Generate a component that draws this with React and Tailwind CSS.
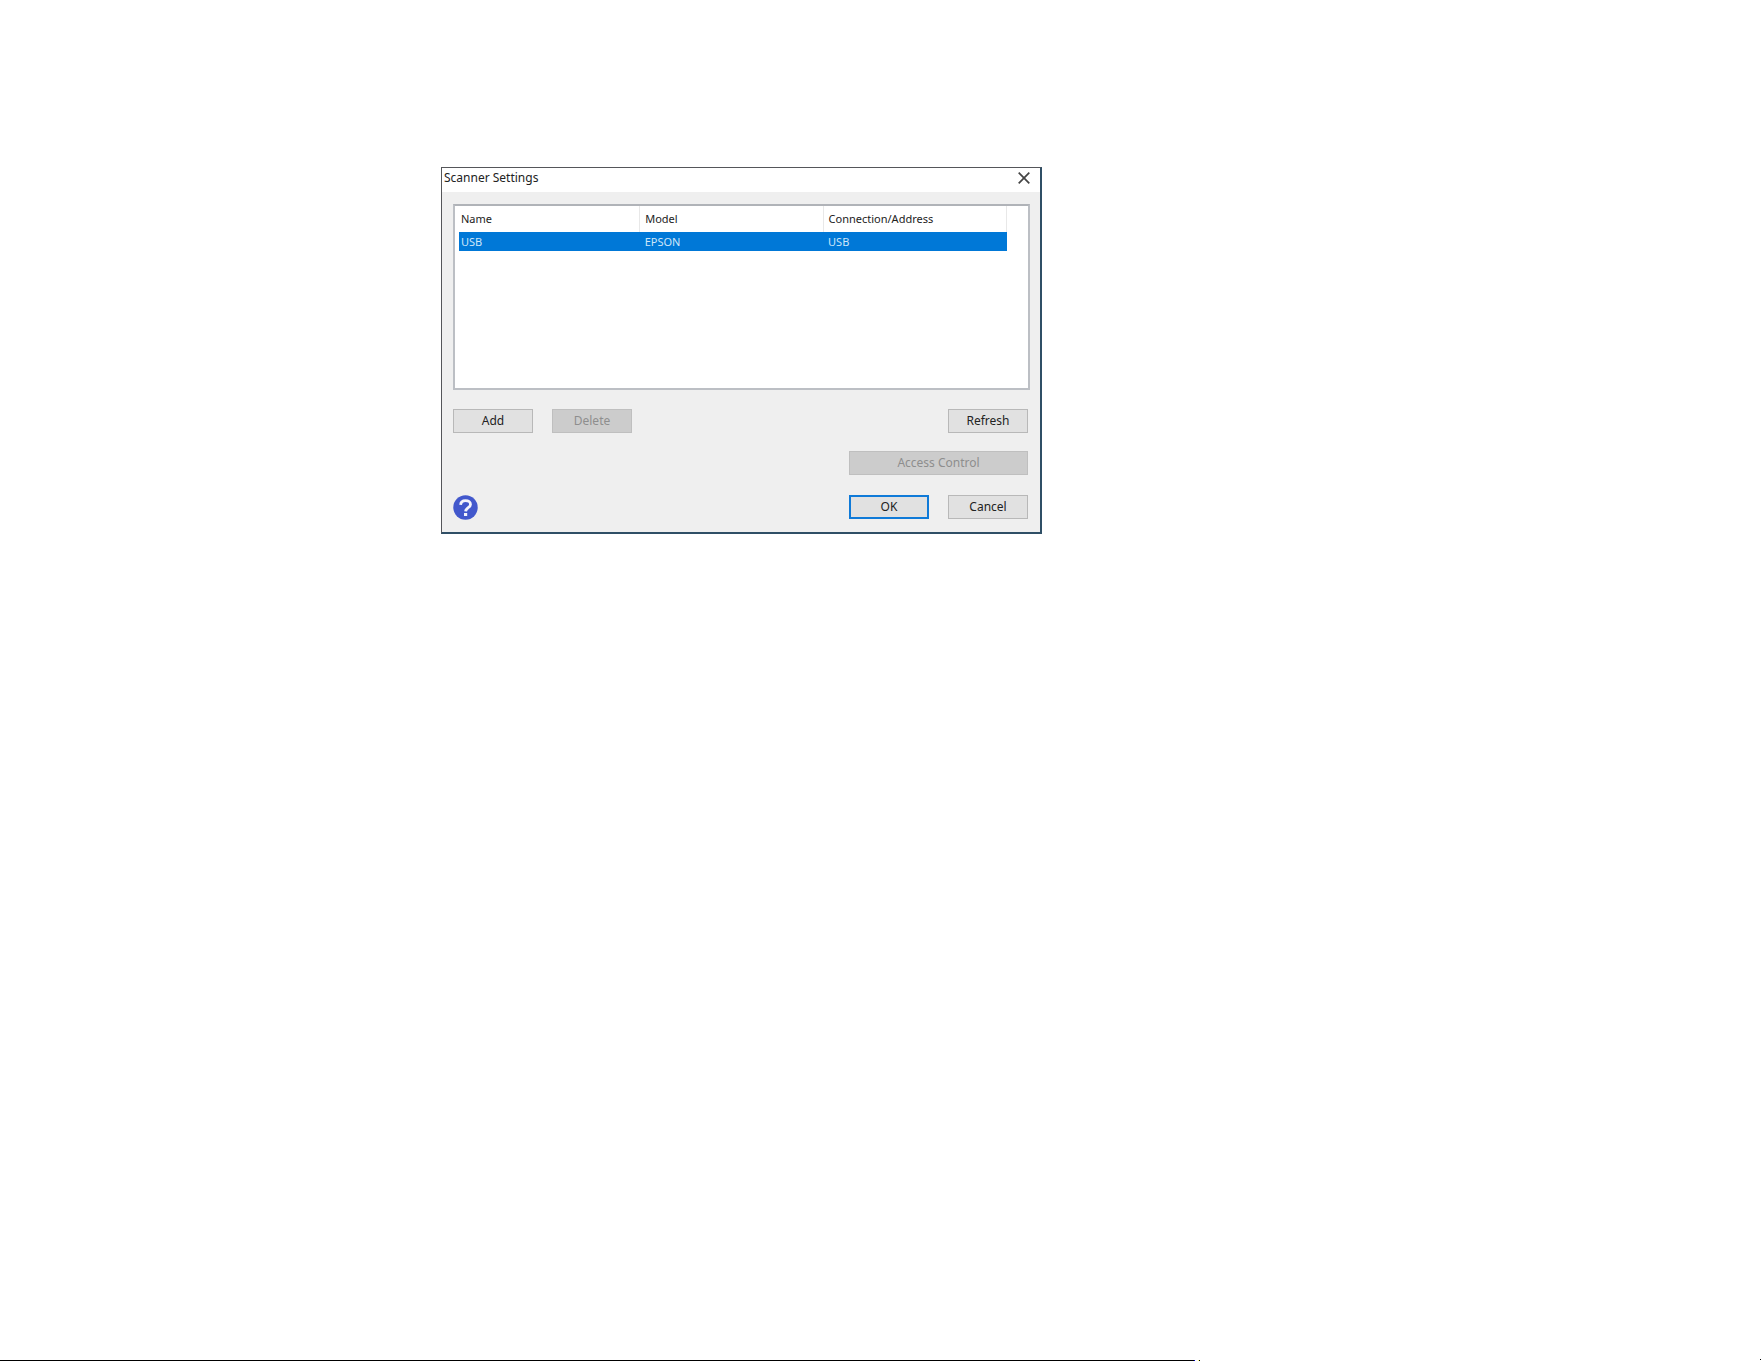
import { useState } from 'react';

const scanners = [
  { name: 'USB', model: 'EPSON', address: 'USB' },
];

const buttonBase = 'h-6 text-center text-[12px] leading-4';
const buttonNormal = 'border border-[#b8b8b8] bg-[#e1e1e1] text-[#222222]';
const buttonDisabled = 'border border-[#bfbfbf] bg-[#cccccc] text-[#8e8e8e]';
const buttonDefault = 'border-2 border-[#0f7ad8] bg-[#e1e1e1] text-[#222222]';

function Button({ kind = 'normal', width = 'w-20', children }) {
  const look = kind === 'disabled' ? buttonDisabled : kind === 'default' ? buttonDefault : buttonNormal;
  return (
    <button type="button" disabled={kind === 'disabled'} className={`${buttonBase} ${look} ${width}`}>
      {children}
    </button>
  );
}

function CloseIcon() {
  return (
    <svg width="12" height="12" viewBox="0 0 12 12" fill="none" stroke="#444444" strokeWidth="1.7">
      <path d="M0.7 0.7L11.3 11.3M11.3 0.7L0.7 11.3" />
    </svg>
  );
}

function HelpIcon() {
  return (
    <svg width="25" height="25" viewBox="0 0 25 25" fill="none">
      <circle cx="12.5" cy="12.5" r="12.2" fill="#4258cc" />
      <path
        d="M7.6 9.8C7.8 6.9 9.7 5.6 12.5 5.6C15.5 5.6 17.5 7.2 17.5 9.4C17.5 12.7 12.8 12.6 12.6 16.4"
        stroke="#f4f4fb"
        strokeWidth="2.8"
      />
      <rect x="11" y="18" width="3.2" height="3" fill="#f4f4fb" />
    </svg>
  );
}

export default function App() {
  const [selected, setSelected] = useState(0);

  return (
    <div className="flex min-h-screen flex-col justify-between bg-white font-['Noto_Sans','Open_Sans',sans-serif] text-[12px] leading-4 text-[#222222]">
      <main className="pt-[167px] pl-[441px]">
        <section className="w-full max-w-[601px] border-t border-r-2 border-b-2 border-l border-t-[#55565a] border-r-[#2f4f66] border-b-[#2f4f66] border-l-[#55565a] bg-[#efefef]">
          <header className="flex h-6 items-start justify-between bg-white pt-[2px] pr-[10px] pl-[2px]">
            <h1 className="text-[12px] leading-4">Scanner Settings</h1>
            <button type="button" aria-label="Close" className="pt-[2px]">
              <CloseIcon />
            </button>
          </header>

          <div className="pt-3 pr-[10px] pb-3 pl-[11px]">
            <div className="h-[186px] border-2 border-t-[#b0b3b8] border-r-[#bcbfc4] border-b-[#bcbfc4] border-l-[#bcbfc4] bg-white pr-[21px] pl-1">
              <table className="w-full table-fixed border-collapse text-left text-[11px]">
                <colgroup>
                  <col className="w-[33%]" />
                  <col />
                  <col />
                </colgroup>
                <thead>
                  <tr className="h-[26px]">
                    <th className="border-r border-[#e8e8e8] p-0 pl-[2px] font-normal">Name</th>
                    <th className="border-r border-[#e8e8e8] p-0 pl-[5px] font-normal">Model</th>
                    <th className="border-r border-[#e8e8e8] p-0 pl-[5px] font-normal">Connection/Address</th>
                  </tr>
                </thead>
                <tbody>
                  {scanners.map((s, idx) => (
                    <tr
                      key={idx}
                      onClick={() => setSelected(idx)}
                      className={idx === selected ? 'h-[19px] bg-[#0078d7] text-[#cfe6f9]' : 'h-[19px]'}
                    >
                      <td className="p-0 pl-[2px]">{s.name}</td>
                      <td className="p-0 pl-[5px]">{s.model}</td>
                      <td className="p-0 pl-[5px]">{s.address}</td>
                    </tr>
                  ))}
                </tbody>
              </table>
            </div>

            <div className="mt-[19px] flex justify-between pr-[2px]">
              <div className="flex gap-[19px]">
                <Button>Add</Button>
                <Button kind="disabled">Delete</Button>
              </div>
              <Button>Refresh</Button>
            </div>

            <div className="mt-[18px] flex justify-end pr-[2px]">
              <Button kind="disabled" width="w-[179px]">Access Control</Button>
            </div>

            <div className="mt-5 flex items-start justify-between pr-[2px]">
              <button type="button" aria-label="Help">
                <HelpIcon />
              </button>
              <div className="flex gap-[19px]">
                <Button kind="default">OK</Button>
                <Button>Cancel</Button>
              </div>
            </div>
          </div>
        </section>
      </main>

      {/* rule along the foot of the page */}
      <footer className="flex items-end justify-between">
        <div className="flex h-px w-[1200px]">
          <div className="h-px grow bg-black" />
          <div className="mr-[3px] h-px w-px bg-[#0000cc]" />
          <div className="h-px w-px bg-[#ffff66]" />
          <div className="h-px w-px bg-black" />
        </div>
        <div className="mb-px h-px w-px bg-black" />
      </footer>
    </div>
  );
}
